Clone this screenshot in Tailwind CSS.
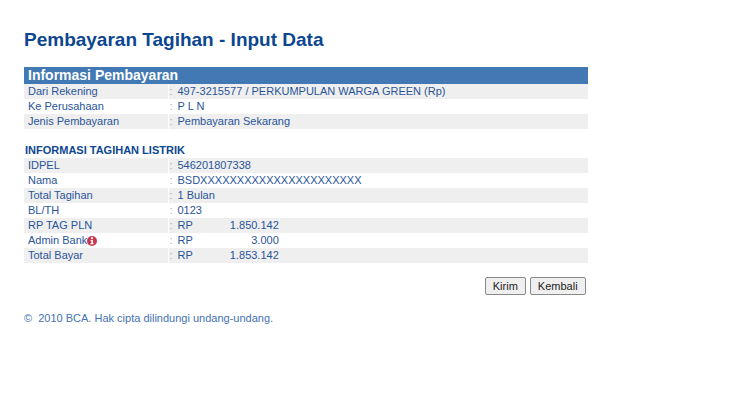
<!DOCTYPE html>
<html lang="id">

<head>
  <meta charset="UTF-8" />
  <meta name="viewport" content="width=device-width, initial-scale=1.0" />
  <title>Pembayaran Tagihan</title>
  <script src="https://cdn.jsdelivr.net/npm/@tailwindcss/browser@4"></script>
</head>

<body class="bg-white font-['Liberation_Sans',Arial,sans-serif] text-[11px] leading-[15px] text-[#2a5499]">

  <main class="w-4/5 pl-6 pr-0.5 pt-7">
    <h1 class="text-[19px] leading-6 font-bold text-[#0d4690]">Pembayaran Tagihan - Input Data</h1>

    <form class="mt-[15px]">
      <h2 class="bg-[#4279b5] pl-1 text-[14px] leading-[17px] font-bold text-white">Informasi Pembayaran</h2>
      <table class="w-full table-fixed border-collapse">
        <colgroup>
          <col class="w-36" />
          <col />
        </colgroup>
        <tbody>
          <tr class="bg-[#efefef]">
            <th class="border-r border-white pl-1 text-left font-normal">Dari Rekening</th>
            <td><span class="inline-block w-[9px] pl-px text-[#9fb0cc]">:</span>497-3215577 / PERKUMPULAN WARGA GREEN (Rp)</td>
          </tr>
          <tr>
            <th class="border-r border-white pl-1 text-left font-normal">Ke Perusahaan</th>
            <td><span class="inline-block w-[9px] pl-px text-[#9fb0cc]">:</span>P L N</td>
          </tr>
          <tr class="bg-[#efefef]">
            <th class="border-r border-white pl-1 text-left font-normal">Jenis Pembayaran</th>
            <td><span class="inline-block w-[9px] pl-px text-[#9fb0cc]">:</span>Pembayaran Sekarang</td>
          </tr>
        </tbody>
      </table>

      <h3 class="mt-3.5 pl-px font-bold text-[#0d4690]">INFORMASI TAGIHAN LISTRIK</h3>
      <table class="w-full table-fixed border-collapse">
        <colgroup>
          <col class="w-36" />
          <col />
        </colgroup>
        <tbody>
          <tr class="bg-[#efefef]">
            <th class="border-r border-white pl-1 text-left font-normal">IDPEL</th>
            <td><span class="inline-block w-[9px] pl-px text-[#9fb0cc]">:</span>546201807338</td>
          </tr>
          <tr>
            <th class="border-r border-white pl-1 text-left font-normal">Nama</th>
            <td><span class="inline-block w-[9px] pl-px text-[#9fb0cc]">:</span>BSDXXXXXXXXXXXXXXXXXXXXXX</td>
          </tr>
          <tr class="bg-[#efefef]">
            <th class="border-r border-white pl-1 text-left font-normal">Total Tagihan</th>
            <td><span class="inline-block w-[9px] pl-px text-[#9fb0cc]">:</span>1 Bulan</td>
          </tr>
          <tr>
            <th class="border-r border-white pl-1 text-left font-normal">BL/TH</th>
            <td><span class="inline-block w-[9px] pl-px text-[#9fb0cc]">:</span>0123</td>
          </tr>
          <tr class="bg-[#efefef]">
            <th class="border-r border-white pl-1 text-left font-normal">RP TAG PLN</th>
            <td>
              <div class="flex"><span class="w-[9px] pl-px text-[#9fb0cc]">:</span><span>RP</span><span class="w-[86px] text-right">1.850.142</span></div>
            </td>
          </tr>
          <tr>
            <th class="border-r border-white pl-1 text-left font-normal">
              <div class="flex items-center">Admin Bank
                <svg class="size-[10px]" viewBox="0 0 10 10" role="img" aria-label="Info">
                  <circle cx="5" cy="5" r="5" fill="#c8394d" />
                  <circle cx="5" cy="2.2" r="1.1" fill="#fff" />
                  <path d="M3.6 4h2.3v3.2h.8v1H3.4v-1h.9V5h-.7z" fill="#fff" />
                </svg>
              </div>
            </th>
            <td>
              <div class="flex"><span class="w-[9px] pl-px text-[#9fb0cc]">:</span><span>RP</span><span class="w-[86px] text-right">3.000</span></div>
            </td>
          </tr>
          <tr class="bg-[#efefef]">
            <th class="border-r border-white pl-1 text-left font-normal">Total Bayar</th>
            <td>
              <div class="flex"><span class="w-[9px] pl-px text-[#9fb0cc]">:</span><span>RP</span><span class="w-[86px] text-right">1.853.142</span></div>
            </td>
          </tr>
        </tbody>
      </table>

      <div class="mt-3.5 flex justify-end gap-1 pr-0.5">
        <button type="submit" class="rounded-xs border border-[#8a8a8a] bg-[#efefef] px-[7px] leading-4 text-[#222]">Kirim</button>
        <button type="button" class="rounded-xs border border-[#8a8a8a] bg-[#efefef] px-[7px] leading-4 text-[#222]">Kembali</button>
      </div>
    </form>

    <footer class="mt-4 text-[#4472b4]">&copy;&nbsp; 2010 BCA. Hak cipta dilindungi undang-undang.</footer>
  </main>

</body>

</html>
